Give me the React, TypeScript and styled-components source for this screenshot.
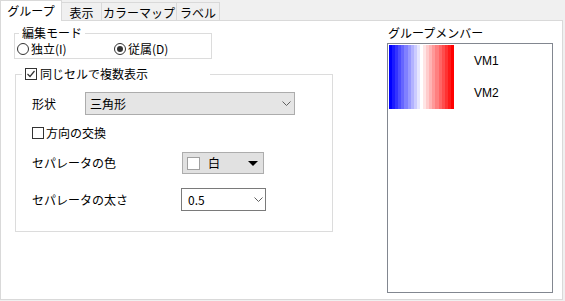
import React from 'react';
import styled, { createGlobalStyle } from 'styled-components';

const GlobalStyle = createGlobalStyle`
  html, body { margin: 0; padding: 0; background: #f0f0f0; }
  body {
    font-family: "Noto Sans CJK JP", "Noto Sans", sans-serif;
    font-size: 12px;
    color: #000;
  }
  * { box-sizing: border-box; }
`;

const N = 21;
const bandColor = (i: number) => {
  const t = i / (N - 1);
  if (t < 0.5) {
    const s = Math.round((t / 0.5) * 255);
    return `rgb(${s},${s},255)`;
  }
  const s = Math.round((1 - (t - 0.5) / 0.5) * 255);
  return `rgb(255,${s},${s})`;
};
const GRADIENT = `linear-gradient(to right, ${Array.from({ length: N }, (_, i) => {
  const a = ((i / N) * 100).toFixed(3);
  const b = (((i + 1) / N) * 100).toFixed(3);
  return `${bandColor(i)} ${a}% ${b}%`;
}).join(', ')})`;

const Window = styled.div`
  width: 565px;
  height: 301px;
  display: flex;
  flex-direction: column;
`;

const TabBar = styled.div`
  display: flex;
  align-items: flex-end;
  height: 20px;
  position: relative;
  z-index: 1;
`;

const Tab = styled.div<{ $active?: boolean; $w: number }>`
  width: ${p => p.$w}px;
  height: ${p => (p.$active ? 21 : 18)}px;
  margin-bottom: ${p => (p.$active ? -1 : 0)}px;
  margin-left: ${p => (p.$active ? 0 : -1)}px;
  background: ${p => (p.$active ? '#ffffff' : '#f0f0f0')};
  border: 1px solid #d9d9d9;
  border-bottom: none;
  display: flex;
  align-items: center;
  justify-content: center;
  line-height: 14px;
  padding-top: ${p => (p.$active ? 0 : 2)}px;
  position: relative;
  z-index: ${p => (p.$active ? 2 : 1)};
`;

const Panel = styled.div`
  width: 563px;
  height: 280px;
  background: #fff;
  border: 1px solid #d9d9d9;
  display: flex;
`;

const LeftCol = styled.div`
  display: flex;
  flex-direction: column;
  padding: 5px 0 0 13px;
`;

const Group = styled.fieldset<{ $w: number; $mt?: number; $ml?: number }>`
  margin: ${p => p.$mt ?? 0}px 0 0 ${p => p.$ml ?? 0}px;
  padding: 0;
  min-width: 0;
  width: ${p => p.$w}px;
  border: 1px solid #dcdcdc;
`;

const Legend = styled.legend<{ $w?: number; $ml: number }>`
  margin-left: ${p => p.$ml}px;
  padding: 0 3px;
  line-height: 14px;
  ${p => (p.$w ? `width: ${p.$w}px;` : '')}
`;

const CheckLegend = styled(Legend)`
  display: flex;
  align-items: center;
  gap: 3px;
  line-height: 16px;
`;

const RadioRow = styled.div`
  display: flex;
  align-items: center;
  height: 17px;
  padding-left: 2px;
  margin-bottom: 1px;
`;

const RadioItem = styled.label`
  display: flex;
  align-items: center;
  gap: 2px;
  width: 106px;
  line-height: 14px;
`;

const RadioCircle = styled.span<{ $checked?: boolean }>`
  width: 12px;
  height: 12px;
  border: 1px solid #333;
  border-radius: 50%;
  background: #fff;
  display: flex;
  align-items: center;
  justify-content: center;
  &::after {
    content: '';
    width: 6px;
    height: 6px;
    border-radius: 50%;
    background: ${p => (p.$checked ? '#333' : 'transparent')};
  }
`;

const CheckBox = styled.span<{ $size: number }>`
  width: ${p => p.$size}px;
  height: ${p => p.$size}px;
  border: 1px solid #333;
  background: #fff;
  display: flex;
  align-items: center;
  justify-content: center;
  flex: none;
`;

const GroupBody = styled.div`
  display: flex;
  flex-direction: column;
  padding: 0 0 20px 16px;
`;

const Row = styled.div<{ $mt: number; $labelW?: number; $h: number }>`
  display: flex;
  align-items: center;
  height: ${p => p.$h}px;
  margin-top: ${p => p.$mt}px;
  line-height: 14px;
  & > .lbl {
    width: ${p => p.$labelW ?? 0}px;
    flex: none;
  }
`;

const CheckRow = styled.label`
  display: flex;
  align-items: center;
  gap: 2px;
`;

const SelectBox = styled.div<{ $w: number; $bg: string; $border: string; $pl: number; $pr: number }>`
  width: ${p => p.$w}px;
  height: 100%;
  background: ${p => p.$bg};
  border: 1px solid ${p => p.$border};
  display: flex;
  align-items: center;
  justify-content: space-between;
  padding: 0 ${p => p.$pr}px 0 ${p => p.$pl}px;
`;

const ColorButton = styled.div`
  width: 82px;
  height: 100%;
  background: #e1e1e1;
  border: 1px solid #adadad;
  display: flex;
  align-items: center;
  padding: 0 5px 0 4px;
`;

const Swatch = styled.span`
  width: 13px;
  height: 13px;
  background: #fff;
  border: 1px solid #a0a0a0;
  margin-right: 8px;
`;

const DownTri = styled.span`
  margin-left: auto;
  width: 0;
  height: 0;
  border-left: 5px solid transparent;
  border-right: 5px solid transparent;
  border-top: 5px solid #000;
`;

const RightCol = styled.div`
  margin-left: auto;
  margin-right: 9px;
  width: 166px;
  padding-top: 5px;
  display: flex;
  flex-direction: column;
`;

const ListLabel = styled.div`
  line-height: 14px;
  padding-left: 1px;
  margin-bottom: 3px;
`;

const ListBox = styled.div`
  height: 250px;
  border: 1px solid #828790;
  background: #fff;
  padding: 1px;
  display: flex;
  flex-direction: column;
`;

const Item = styled.div`
  display: flex;
  align-items: center;
  height: 32px;
`;

const GradientImg = styled.div`
  width: 65px;
  height: 32px;
  background: ${GRADIENT};
`;

const ItemName = styled.span`
  margin-left: 20px;
  font-family: "Liberation Sans", Arial, sans-serif;
  font-size: 12px;
`;

const Chevron = () => (
  <svg width="9" height="5" viewBox="0 0 9 5">
    <polyline points="0.5,0.5 4.5,4.5 8.5,0.5" fill="none" stroke="#606060" strokeWidth="1" />
  </svg>
);

const Tick = () => (
  <svg width="10" height="10" viewBox="0 0 10 10">
    <polyline points="1.5,5 4,7.5 8.5,2" fill="none" stroke="#333" strokeWidth="1.2" />
  </svg>
);

export default function App() {
  return (
    <>
      <GlobalStyle />
      <Window>
        <TabBar>
          <Tab $active $w={62}>グループ</Tab>
          <Tab $w={41}>表示</Tab>
          <Tab $w={76}>カラーマップ</Tab>
          <Tab $w={44}>ラベル</Tab>
        </TabBar>
        <Panel>
          <LeftCol>
            <Group $w={198}>
              <Legend $ml={4}>編集モード</Legend>
              <RadioRow>
                <RadioItem><RadioCircle />独立(I)</RadioItem>
                <RadioItem><RadioCircle $checked />従属(D)</RadioItem>
              </RadioRow>
            </Group>
            <Group $w={318} $mt={7} $ml={1}>
              <CheckLegend $ml={6} $w={188}>
                <CheckBox $size={12}><Tick /></CheckBox>
                同じセルで複数表示
              </CheckLegend>
              <GroupBody>
                <Row $mt={10} $h={23} $labelW={53}>
                  <span className="lbl">形状</span>
                  <SelectBox $w={210} $bg="#e5e5e5" $border="#acacac" $pl={4} $pr={3}>
                    三角形
                    <Chevron />
                  </SelectBox>
                </Row>
                <Row $mt={10} $h={16}>
                  <CheckRow><CheckBox $size={12} />方向の交換</CheckRow>
                </Row>
                <Row $mt={11} $h={22} $labelW={150}>
                  <span className="lbl">セパレータの色</span>
                  <ColorButton>
                    <Swatch />白<DownTri />
                  </ColorButton>
                </Row>
                <Row $mt={14} $h={23} $labelW={149}>
                  <span className="lbl">セパレータの太さ</span>
                  <SelectBox $w={85} $bg="#ffffff" $border="#7a7a7a" $pl={6} $pr={2}>
                    0.5
                    <Chevron />
                  </SelectBox>
                </Row>
              </GroupBody>
            </Group>
          </LeftCol>
          <RightCol>
            <ListLabel>グループメンバー</ListLabel>
            <ListBox>
              <Item><GradientImg /><ItemName>VM1</ItemName></Item>
              <Item><GradientImg /><ItemName>VM2</ItemName></Item>
            </ListBox>
          </RightCol>
        </Panel>
      </Window>
    </>
  );
}
